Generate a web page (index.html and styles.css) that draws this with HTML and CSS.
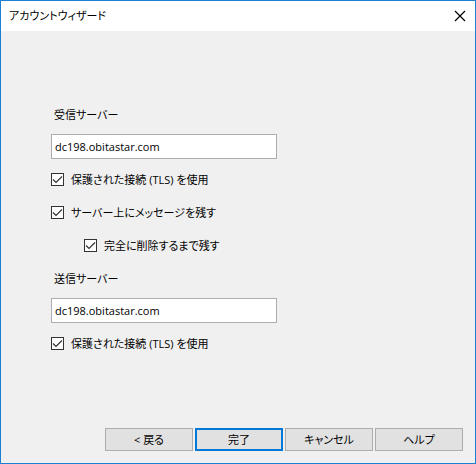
FILE: index.html
```
<!DOCTYPE html>
<html lang="ja">
<head>
    <meta charset="UTF-8">
    <meta name="viewport" content="width=device-width, initial-scale=1.0">
    <title>アカウントウィザード</title>
    <link rel="stylesheet" href="styles.css">
</head>
<body>
    <header class="titlebar">
        <h1>アカウントウィザード</h1>
        <button type="button" class="close" aria-label="閉じる">
            <svg width="12" height="12" viewBox="0 0 12 12" aria-hidden="true">
                <path d="M1 1 L11 11 M11 1 L1 11" fill="none" stroke="#000" stroke-width="1.2"/>
            </svg>
        </button>
    </header>

    <form class="wizard">
        <div class="fields">
            <!-- 受信サーバー -->
            <div class="group">
                <label class="caption" for="incoming">受信サーバー</label>
                <input type="text" class="server" id="incoming" value="dc198.obitastar.com">
                <label class="check"><input type="checkbox" checked>保護された接続 (TLS) を使用</label>
                <label class="check"><input type="checkbox" checked>サーバー上にメッセージを残す</label>
                <label class="check nested"><input type="checkbox" checked>完全に削除するまで残す</label>
            </div>

            <!-- 送信サーバー -->
            <div class="group">
                <label class="caption" for="outgoing">送信サーバー</label>
                <input type="text" class="server" id="outgoing" value="dc198.obitastar.com">
                <label class="check"><input type="checkbox" checked>保護された接続 (TLS) を使用</label>
            </div>
        </div>

        <div class="buttons">
            <button type="button">&lt; 戻る</button>
            <button type="submit" class="default">完了</button>
            <button type="button">キャンセル</button>
            <button type="button">ヘルプ</button>
        </div>
    </form>
</body>
</html>
```

FILE: styles.css
```
* {
    box-sizing: border-box;
}
body {
    display: flex;
    flex-direction: column;
    min-height: 100vh;
    margin: 0;
    border: 1px solid #1a80d4;
    background-color: #f0f0f0;
    color: #000;
    font-family: "Open Sans", "Noto Sans CJK JP", sans-serif;
    font-size: 11px;
    line-height: 16px;
    font-feature-settings: "palt";
}
input, button {
    font: inherit;
    font-feature-settings: inherit;
    color: inherit;
}
.titlebar {
    display: flex;
    align-items: center;
    justify-content: space-between;
    height: 30px;
    padding-left: 8px;
    background-color: #fff;
}
h1 {
    margin: 0;
    font-size: 11px;
    font-weight: normal;
}
.close {
    display: flex;
    padding: 9px 9px;
    border: none;
    background: none;
}
.wizard {
    display: flex;
    flex: 1;
    flex-direction: column;
    justify-content: space-between;
    padding: 76px 12px 12px 50px;
}
.fields {
    display: flex;
    flex-direction: column;
    gap: 17px;
}
.group {
    display: flex;
    flex-direction: column;
    align-items: flex-start;
}
.caption {
    padding-left: 3px;
    margin-bottom: 11px;
}
.server {
    width: 226px;
    height: 25px;
    padding: 0 3px;
    border: 1px solid #abadb3;
    background-color: #fff;
}
.check {
    display: flex;
    align-items: center;
    gap: 7px;
    margin-top: 16px;
    line-height: 17px;
}
.server + .check {
    margin-top: 12px;
}
.nested {
    margin-left: 33px;
}
.check input {
    appearance: none;
    width: 13px;
    height: 13px;
    margin: 0;
    border: 1px solid #333;
    background: #fff url("data:image/svg+xml,%3Csvg xmlns='http://www.w3.org/2000/svg' viewBox='0 0 11 11'%3E%3Cpath d='M1 5.5 L4 8.5 L10 2.5' fill='none' stroke='%23333' stroke-width='1.2'/%3E%3C/svg%3E") center / 11px 11px no-repeat;
}
.check input:not(:checked) {
    background-image: none;
}
.buttons {
    display: flex;
    justify-content: flex-end;
    gap: 2px;
}
.buttons button {
    width: 88px;
    height: 23px;
    padding: 0;
    border: 1px solid #adadad;
    background-color: #e1e1e1;
}
.buttons .default {
    border: 2px solid #0078d7;
}
```
